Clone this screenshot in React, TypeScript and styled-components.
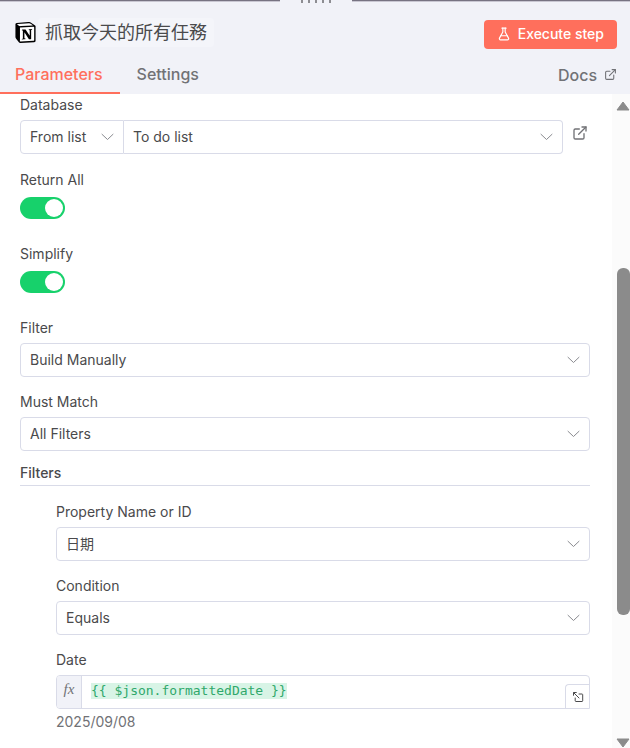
import React from "react";
import styled, { createGlobalStyle, css } from "styled-components";
import { ExternalLink, FlaskConical } from "lucide-react";
import { SiNotion } from "react-icons/si";

const colors = {
  primary: "#ff6f5c",
  success: "#17d16b",
  text: "#4a4a4c",
  textLight: "#717276",
  border: "#d9dbe8",
  header: "#f1f2f8",
};

const GlobalStyle = createGlobalStyle`
  * { box-sizing: border-box; }
  body {
    margin: 0;
    background: #fff;
    color: ${colors.text};
    font-family: Inter, "Noto Sans CJK TC", sans-serif;
    font-size: 14px;
    line-height: 20px;
  }
  button, input, select { font: inherit; color: inherit; margin: 0; }
`;

const Page = styled.div`
  display: flex;
  flex-direction: column;
  height: 100vh;
  overflow: hidden;
`;

const DragBar = styled.div`
  display: grid;
  grid-template-columns: 280fr 72px 278fr;
  height: 3px;
  flex: none;
  background: ${colors.header};
`;

const Edge = styled.span`
  height: 2px;
  background: #777382;
  border-bottom: 1px solid #c9c7d2;
`;

const Grip = styled.span`
  display: flex;
  justify-content: center;
  gap: 5px;
`;

const GripDot = styled.i`
  width: 2px;
  height: 3px;
  background: #8d8d92;
`;

const Header = styled.header`
  flex: none;
  background: ${colors.header};
`;

const TitleRow = styled.div`
  display: flex;
  align-items: center;
  justify-content: space-between;
  height: 53px;
  padding: 9px 13px 0 15px;
`;

const TitleGroup = styled.div`
  display: flex;
  align-items: center;
  gap: 2px;
  padding-bottom: 3px;
`;

const Title = styled.h1`
  margin: 0;
  padding: 0 7px;
  border-radius: 4px;
  background: #f4f5fa;
  font-size: 18px;
  font-weight: 400;
  line-height: 29px;
`;

const ExecuteButton = styled.button`
  display: flex;
  align-items: center;
  gap: 7px;
  height: 29px;
  padding: 0 13px;
  border: 0;
  border-radius: 4px;
  background: ${colors.primary};
  color: #fff;
  font-weight: 500;
  cursor: pointer;
`;

const TabRow = styled.nav`
  display: flex;
  justify-content: space-between;
  height: 38px;
  padding-right: 13px;
  font-size: 16px;
  font-weight: 500;
`;

const TabList = styled.div`
  display: flex;
  gap: 2px;
`;

const Tab = styled.button<{ $active?: boolean }>`
  padding: 0 17px 0 15px;
  border: 0;
  border-bottom: 2px solid transparent;
  background: none;
  color: ${colors.textLight};
  cursor: pointer;
  ${(p) =>
    p.$active &&
    css`
      border-color: ${colors.primary};
      color: ${colors.primary};
    `}
`;

const DocsLink = styled.a`
  display: flex;
  align-items: center;
  gap: 7px;
  color: ${colors.textLight};
  text-decoration: none;

  > svg { margin-bottom: 2px; }
`;

const Body = styled.div`
  display: flex;
  flex: 1;
  min-height: 0;
`;

const Form = styled.form`
  display: flex;
  flex: 1;
  flex-direction: column;
  gap: 15px;
  min-width: 0;
  padding: 1px 22px 0 20px;
`;

const Field = styled.div`
  display: flex;
  flex-direction: column;
  gap: 5px;
`;

const Label = styled.label`
  align-self: flex-start;
`;

const Locator = styled.div`
  display: grid;
  grid-template-columns: 104px 1fr 27px;
  height: 35px;
`;

const SelectBox = styled.div<{ $side?: "left" | "right" }>`
  display: grid;
  align-items: center;
  height: 34px;
  border: 1px solid ${colors.border};
  border-radius: 4px;
  ${(p) => p.$side === "left" && "border-radius: 4px 0 0 4px;"}
  ${(p) => p.$side === "right" && "border-left: 0; border-radius: 0 4px 4px 0;"}

  > * { grid-area: 1 / 1; }
  > svg { justify-self: end; margin-right: 9px; pointer-events: none; }
`;

const NativeSelect = styled.select`
  appearance: none;
  width: 100%;
  height: 32px;
  padding: 0 30px 0 9px;
  border: 0;
  background: none;
  outline-color: ${colors.primary};
`;

const OpenLink = styled.a`
  justify-self: end;
  padding-top: 5px;
  margin-right: 2px;
  height: 20px;
  color: ${colors.textLight};
`;

const ToggleSlot = styled.div`
  height: 34px;
  padding-top: 2px;
`;

const Toggle = styled.input`
  appearance: none;
  display: flex;
  align-items: center;
  justify-content: flex-start;
  width: 45px;
  height: 22px;
  padding: 0 2px;
  border-radius: 11px;
  background: #c4c6d0;
  cursor: pointer;

  &::before {
    content: "";
    width: 18px;
    height: 18px;
    border-radius: 50%;
    background: #fff;
  }
  &:checked {
    justify-content: flex-end;
    background: ${colors.success};
  }
`;

const SectionTitle = styled.h2`
  margin: -3px 0 1px;
  padding-bottom: 2px;
  border-bottom: 1px solid ${colors.border};
  font-size: 14px;
  font-weight: 500;
  line-height: 20px;
`;

const Nested = styled.div`
  display: flex;
  flex-direction: column;
  gap: 15px;
  padding-left: 36px;
`;

const Expression = styled.div`
  display: flex;
  height: 34px;
  border: 1px solid ${colors.border};
  border-radius: 4px 4px 0 4px;
`;

const FxBadge = styled.span`
  display: flex;
  justify-content: center;
  width: 25px;
  border-right: 1px solid ${colors.border};
  border-radius: 3px 0 0 3px;
  background: ${colors.header};
  color: ${colors.textLight};
  font: italic 15px/27px "Liberation Serif", serif;
`;

const ExpressionValue = styled.div`
  flex: 1;
  min-width: 0;
  padding: 7px 9px;
`;

const ExpressionInput = styled.input`
  display: block;
  width: 25ch;
  max-width: 100%;
  height: 16px;
  padding: 0;
  border: 0;
  background: #d8f4e6;
  color: #2fa86b;
  font-family: "DejaVu Sans Mono", monospace;
  font-size: 13px;
  line-height: 16px;
`;

const ExpandButton = styled.button`
  display: grid;
  place-items: center;
  align-self: flex-end;
  width: 24px;
  height: 24px;
  padding: 0;
  border: 1px solid ${colors.border};
  border-width: 1px 0 0 1px;
  border-radius: 4px 0 0 0;
  background: #fff;
  cursor: pointer;
`;

const Hint = styled.output`
  margin-top: -2px;
  color: ${colors.textLight};
`;

const ScrollTrack = styled.div`
  display: flex;
  flex: none;
  flex-direction: column;
  align-items: flex-end;
  width: 18px;
  padding-top: 7px;
  background: #fbfbfb;
`;

const ScrollSpace = styled.span<{ $share: number }>`
  flex: ${(p) => p.$share} 1 0;
`;

const ScrollThumb = styled.span`
  flex: 348 1 0;
  width: 13px;
  border-radius: 6px;
  background: #8b8b8b;
`;

const Chevron = () => (
  <svg width="13" height="8" viewBox="0 0 13 8" fill="none" stroke="#8a8b90" strokeLinecap="round" strokeLinejoin="round">
    <path d="M1 1.3l5.5 5.2L12 1.3" />
  </svg>
);

const ExpandIcon = () => (
  <svg width="12" height="12" viewBox="0 0 12 12" fill="none" stroke="#4a4a4c" strokeLinecap="round" strokeLinejoin="round" aria-hidden="true">
    <path d="M7 3h3q.7 0 .7.7v6.1q0 .7-.7.7H3.9q-.7 0-.7-.7V7" />
    <path d="M1.8 1.8L7 7M1.5 4.3V1.5h2.8" />
  </svg>
);

const NotionLogo = () => (
  <svg width="21" height="21" viewBox="0 0 24 24" aria-hidden="true">
    <path d="M2.5 2.8L17 1.5l5 3.5v16.5L6.5 23 2 18z" fill="#fff" />
    <SiNotion size={24} color="#000" />
    <path d="M1.7 3.3L5.6 6.2v16L1.7 17.5z" fill="#000" />
  </svg>
);

const ScrollArrow = ({ down = false }: { down?: boolean }) => (
  <svg width="14" height="10" viewBox="0 0 14 10" fill="#8b8b8b" stroke="#8b8b8b" strokeLinejoin="round" aria-hidden="true">
    <path d={down ? "M1 1h12L7 9z" : "M1 9h12L7 1z"} />
  </svg>
);

type SelectProps = { id?: string; name?: string; options: string[]; side?: "left" | "right" };

const Select = ({ id, name, options, side }: SelectProps) => (
  <SelectBox $side={side}>
    <NativeSelect id={id} aria-label={name}>
      {options.map((option) => (
        <option key={option}>{option}</option>
      ))}
    </NativeSelect>
    <Chevron />
  </SelectBox>
);

const SelectField = ({ id, label, options }: { id: string; label: string; options: string[] }) => (
  <Field>
    <Label htmlFor={id}>{label}</Label>
    <Select id={id} options={options} />
  </Field>
);

const ToggleField = ({ id, label }: { id: string; label: string }) => (
  <Field>
    <Label htmlFor={id}>{label}</Label>
    <ToggleSlot>
      <Toggle id={id} type="checkbox" role="switch" defaultChecked />
    </ToggleSlot>
  </Field>
);

export default function App() {
  return (
    <>
      <GlobalStyle />
      <Page>
        <DragBar>
          <Edge />
          <Grip>
            {[0, 1, 2, 3, 4].map((dot) => (
              <GripDot key={dot} />
            ))}
          </Grip>
          <Edge />
        </DragBar>
        <Header>
          <TitleRow>
            <TitleGroup>
              <NotionLogo />
              <Title>抓取今天的所有任務</Title>
            </TitleGroup>
            <ExecuteButton type="button">
              <FlaskConical size={14} />
              Execute step
            </ExecuteButton>
          </TitleRow>
          <TabRow>
            <TabList>
              <Tab type="button" $active>Parameters</Tab>
              <Tab type="button">Settings</Tab>
            </TabList>
            <DocsLink href="#docs">
              Docs
              <ExternalLink size={13} />
            </DocsLink>
          </TabRow>
        </Header>
        <Body>
          <Form>
            <Field>
              <Label htmlFor="database">Database</Label>
              <Locator>
                <Select name="Database source" side="left" options={["From list"]} />
                <Select id="database" side="right" options={["To do list"]} />
                <OpenLink href="#database" aria-label="Open database">
                  <ExternalLink size={16} />
                </OpenLink>
              </Locator>
            </Field>
            <ToggleField id="return-all" label="Return All" />
            <ToggleField id="simplify" label="Simplify" />
            <SelectField id="filter" label="Filter" options={["Build Manually"]} />
            <SelectField id="must-match" label="Must Match" options={["All Filters"]} />
            <SectionTitle>Filters</SectionTitle>
            <Nested>
              <SelectField id="property" label="Property Name or ID" options={["日期"]} />
              <SelectField id="condition" label="Condition" options={["Equals"]} />
              <Field>
                <Label htmlFor="date">Date</Label>
                <Expression>
                  <FxBadge>fx</FxBadge>
                  <ExpressionValue>
                    <ExpressionInput id="date" defaultValue="{{ $json.formattedDate }}" spellCheck={false} />
                  </ExpressionValue>
                  <ExpandButton type="button" aria-label="Expand editor">
                    <ExpandIcon />
                  </ExpandButton>
                </Expression>
                <Hint htmlFor="date">2025/09/08</Hint>
              </Field>
            </Nested>
          </Form>
          <ScrollTrack>
            <ScrollArrow />
            <ScrollSpace $share={157} />
            <ScrollThumb />
            <ScrollSpace $share={123} />
            <ScrollArrow down />
          </ScrollTrack>
        </Body>
      </Page>
    </>
  );
}
